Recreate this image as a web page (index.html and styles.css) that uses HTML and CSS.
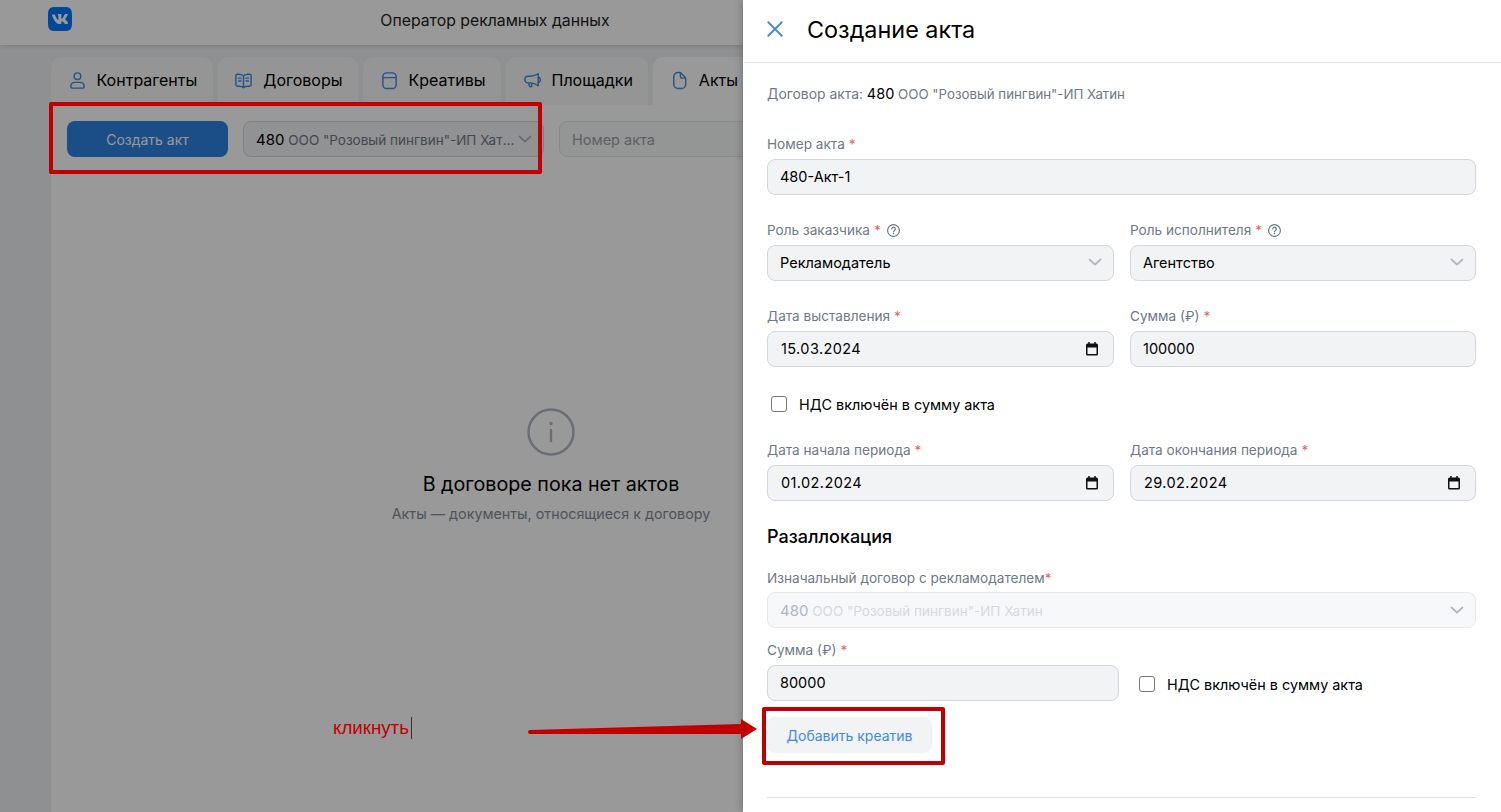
FILE: index.html
```html
<!DOCTYPE html>
<html lang="ru">
<head>
    <meta charset="UTF-8">
    <meta name="viewport" content="width=device-width, initial-scale=1.0">
    <title>Оператор рекламных данных</title>
    <link rel="stylesheet" href="styles.css">
</head>
<body>
    <svg class="sprite" width="0" height="0">
        <symbol id="chevron" viewBox="0 0 16 16"><path d="M2.500 5.500 8 10.500l5.500-5" fill="none" stroke="currentColor" stroke-width="1.7" stroke-linecap="round" stroke-linejoin="round"/></symbol>
        <symbol id="calendar" viewBox="0 0 16 16"><path d="M3.500 2.500h9A1.500 1.500 0 0 1 14 4v9a1.500 1.500 0 0 1-1.500 1.500h-9A1.500 1.500 0 0 1 2 13V4a1.500 1.500 0 0 1 1.500-1.500zM3.500 6.500V13h9V6.500z" fill="#111" fill-rule="evenodd"/><path d="M5 1v2.500M11 1v2.500" stroke="#111" stroke-width="1.500"/></symbol>
        <symbol id="help" viewBox="0 0 16 16"><circle cx="8" cy="8" r="6.300" fill="none" stroke="currentColor" stroke-width="1.300"/><path d="M6.100 6.400a1.900 1.900 0 1 1 3 1.500c-.7.500-1.100.9-1.100 1.700" fill="none" stroke="currentColor" stroke-width="1.300" stroke-linecap="round"/><circle cx="8" cy="11.500" r=".8" fill="currentColor"/></symbol>
    </svg>

    <div class="page">
        <header class="topbar">
            <svg class="logo" viewBox="2 2 20 20"><path fill="#07f" d="M15.070 2H8.930C3.330 2 2 3.330 2 8.930v6.140C2 20.670 3.330 22 8.930 22h6.140c5.600 0 6.930-1.330 6.930-6.930V8.930C22 3.330 20.670 2 15.070 2zm3.080 14.270h-1.460c-.55 0-.72-.44-1.710-1.440-.86-.83-1.240-.94-1.450-.94-.3 0-.38.08-.38.49v1.310c0 .35-.11.56-1.040.56-1.540 0-3.240-.93-4.440-2.670-1.800-2.540-2.300-4.450-2.300-4.840 0-.21.08-.41.49-.41h1.460c.37 0 .51.17.65.570.72 2.080 1.920 3.900 2.410 3.900.19 0 .27-.09.27-.56V9.680c-.06-.99-.58-1.070-.58-1.420 0-.17.14-.34.37-.34h2.290c.31 0 .42.17.42.54v2.890c0 .31.14.42.23.42.19 0 .34-.11.68-.46 1.050-1.180 1.800-2.990 1.800-2.990.1-.21.27-.41.64-.41h1.460c.44 0 .53.23.44.54-.18.85-1.970 3.370-1.970 3.370-.16.25-.22.37 0 .65.16.21.67.65 1.020 1.050.63.72 1.120 1.320 1.250 1.740.13.41-.08.62-.49.62z"/></svg>
            <div class="topbar-title">Оператор рекламных данных</div>
        </header>

        <main class="content">
            <nav class="tabs">
                <a class="tab">
                    <svg class="tab-icon" viewBox="0 0 20 20"><circle cx="10" cy="5.500" r="3.500"/><path d="M3 16c0-2.600 2.200-4 4.500-4h5c2.300 0 4.500 1.400 4.500 4 0 1.300-.9 2-2 2H5c-1.100 0-2-.7-2-2z"/></svg>
                    Контрагенты
                </a>
                <a class="tab">
                    <svg class="tab-icon" viewBox="0 0 20 20"><path d="M10 5c-1.500-1-3-1.500-5-1.500H3.500A1.500 1.500 0 0 0 2 5v9.500A1.500 1.500 0 0 0 3.500 16H6c1.500 0 3 .5 4 1.500 1-1 2.500-1.500 4-1.500h2.500a1.500 1.500 0 0 0 1.500-1.500V5a1.500 1.500 0 0 0-1.500-1.500H15c-2 0-3.500.5-5 1.500zM10 5v12.500M4.800 7.500h2.600M4.800 10.500h2.600M12.600 7.500h2.600M12.600 10.500h2.600"/></svg>
                    Договоры
                </a>
                <a class="tab">
                    <svg class="tab-icon" viewBox="0 0 20 20"><rect x="3" y="2" width="14" height="16.500" rx="4"/><path d="M3 7h14"/></svg>
                    Креативы
                </a>
                <a class="tab">
                    <svg class="tab-icon" viewBox="0 0 20 20"><path d="M16 3v12.500c-3-2-5.500-3-8-3H5a3 3 0 0 1-3-3V8.500a3 3 0 0 1 3-3h3c2.500 0 5-1 8-2.500zM16 6.500c1.500.3 2.300 1.200 2.300 2.800s-.8 2.500-2.300 2.800M6 12.500l.8 3.300a1.300 1.300 0 0 0 2.500-.6L8.800 13"/></svg>
                    Площадки
                </a>
                <a class="tab tab-active">
                    <svg class="tab-icon" viewBox="0 0 20 20"><path d="M4 6A4.500 4.500 0 0 1 8.500 1.500h1.300c.7 0 1.300.3 1.800.7l4.100 4.100c.5.500.8 1.100.8 1.800v6A4.500 4.500 0 0 1 12 18.500H8.500A4.500 4.500 0 0 1 4 14zM11 2v3.500a2 2 0 0 0 2 2h3.300"/></svg>
                    Акты
                </a>
            </nav>

            <section class="tab-panel">
                <div class="toolbar">
                    <button class="btn-primary">Создать акт</button>
                    <div class="field field-select toolbar-select">
                        <span class="select-text"><b>480</b> ООО "Розовый пингвин"-ИП Хатин</span>
                        <svg class="chevron"><use href="#chevron"/></svg>
                    </div>
                    <div class="field field-select toolbar-search">Номер акта</div>
                </div>

                <div class="empty">
                    <svg class="empty-icon" viewBox="0 0 48 48"><circle cx="24" cy="24" r="22.500"/><circle class="empty-dot" cx="24" cy="15.500" r="1.700"/><path d="M24 22v11"/></svg>
                    <div class="empty-title">В договоре пока нет актов</div>
                    <div class="empty-sub">Акты — документы, относящиеся к договору</div>
                </div>
            </section>
        </main>
    </div>

    <div class="overlay"></div>

    <aside class="drawer">
        <div class="drawer-head">
            <svg class="close" viewBox="0 0 20 20"><path d="M2.500 2.500l15 15M17.500 2.500l-15 15"/></svg>
            <h1 class="drawer-title">Создание акта</h1>
        </div>

        <form class="drawer-body">
            <div class="contract-line"><span class="contract-caption">Договор акта:</span> <b>480</b> ООО "Розовый пингвин"-ИП Хатин</div>

            <div class="group group-first">
                <label class="label">Номер акта <i>*</i></label>
                <div class="field">480-Акт-1</div>
            </div>

            <div class="row">
                <div>
                    <label class="label">Роль заказчика <i>*</i> <svg class="help"><use href="#help"/></svg></label>
                    <div class="field">Рекламодатель <svg class="chevron"><use href="#chevron"/></svg></div>
                </div>
                <div>
                    <label class="label">Роль исполнителя <i>*</i> <svg class="help"><use href="#help"/></svg></label>
                    <div class="field">Агентство <svg class="chevron"><use href="#chevron"/></svg></div>
                </div>
            </div>

            <div class="row">
                <div>
                    <label class="label">Дата выставления <i>*</i></label>
                    <div class="field field-date">15.03.2024 <svg class="cal"><use href="#calendar"/></svg></div>
                </div>
                <div>
                    <label class="label">Сумма (₽) <i>*</i></label>
                    <div class="field">100000</div>
                </div>
            </div>

            <div class="check check-vat"><span class="box"></span>НДС включён в сумму акта</div>

            <div class="row row-period">
                <div>
                    <label class="label">Дата начала периода <i>*</i></label>
                    <div class="field field-date">01.02.2024 <svg class="cal"><use href="#calendar"/></svg></div>
                </div>
                <div>
                    <label class="label">Дата окончания периода <i>*</i></label>
                    <div class="field field-date">29.02.2024 <svg class="cal"><use href="#calendar"/></svg></div>
                </div>
            </div>

            <h2 class="section-title">Разаллокация</h2>

            <div class="group group-origin">
                <label class="label label-tight">Изначальный договор с рекламодателем<i>*</i></label>
                <div class="field field-select field-disabled">
                    <span class="select-text"><b>480</b> ООО "Розовый пингвин"-ИП Хатин</span>
                    <svg class="chevron"><use href="#chevron"/></svg>
                </div>
            </div>

            <div class="alloc-row">
                <div>
                    <label class="label">Сумма (₽) <i>*</i></label>
                    <div class="field">80000</div>
                </div>
                <div class="check"><span class="box"></span>НДС включён в сумму акта</div>
            </div>

            <button class="btn-secondary" type="button">Добавить креатив</button>
            <hr class="divider">
        </form>
    </aside>

    <!-- пометки поверх скриншота -->
    <div class="mark mark-toolbar"></div>
    <div class="mark mark-add"></div>
    <div class="click-note">кликнуть<span class="caret"></span></div>
    <svg class="arrow" viewBox="0 0 240 24"><path d="M2 11 213 5V0l16 10-16 10v-5L2 15a2 2 0 0 1 0-4z"/></svg>
</body>
</html>
```

FILE: styles.css
```css
* {
    margin: 0;
    padding: 0;
    box-sizing: border-box;
}

html, body {
    width: 100%;
    height: 100%;
    overflow: hidden;
}

body {
    position: relative;
    font-family: 'Inter', 'Roboto', sans-serif;
    font-size: 14px;
    color: #000;
    background: #edf0f3;
}

.sprite {
    position: absolute;
}

.page {
    height: 100%;
}

.topbar {
    height: 45px;
    display: flex;
    padding-left: 48px;
    background: #fff;
    box-shadow: 0 1px 4px rgba(0,0,0,0.15);
}

.logo {
    width: 24px;
    height: 24px;
    margin-top: 7px;
}

.topbar-title {
    width: 846px;
    padding-top: 11px;
    font-size: 15.8px;
    line-height: 20px;
    text-align: center;
    color: #222;
}

.content {
    width: 1000px;
    margin: 12px 0 0 51px;
}

.tabs {
    display: flex;
    gap: 5px;
}

.tab {
    display: flex;
    align-items: center;
    gap: 10px;
    height: 48px;
    padding: 0 15.5px 2px 16.5px;
    font-size: 16px;
    background: #f8f8f8;
    border-radius: 10px 10px 0 0;
    white-space: nowrap;
}

.tab-active {
    background: #fff;
}

.tab-icon {
    width: 19px;
    height: 19px;
    fill: none;
    stroke: #3f8ae0;
    stroke-width: 1.5;
    stroke-linejoin: round;
    stroke-linecap: round;
}

.tab-panel {
    height: 707px;
    background: #fff;
}

.toolbar {
    display: flex;
    gap: 15px;
    padding: 16px 16px 0;
}

.btn-primary {
    width: 161px;
    height: 36px;
    border: none;
    border-radius: 8px;
    background: #2d81e0;
    color: #fff;
    font: inherit;
}

.field {
    display: flex;
    align-items: center;
    justify-content: space-between;
    height: 36px;
    padding: 0 12px 2px;
    background: #f2f3f5;
    border: 1px solid #d3d6da;
    border-radius: 8px;
    font-size: 14.5px;
    white-space: nowrap;
}

.field-select {
    padding-bottom: 0;
}

.field-date {
    padding-left: 13px;
    letter-spacing: 0.4px;
}

.toolbar-select {
    width: 301px;
    flex: none;
}

.toolbar-search {
    flex: 1;
    background: #f7f8f9;
    border-color: #e2e4e7;
    color: #99a2ad;
}

.select-text {
    overflow: hidden;
    text-overflow: ellipsis;
    font-size: 13.5px;
    color: #6f7985;
}

.select-text b {
    font-size: 15px;
    font-weight: 400;
    color: #000;
}

.chevron {
    flex: none;
    width: 16px;
    height: 16px;
    margin-right: -2px;
    color: #aeb7c2;
}

.cal {
    flex: none;
    width: 16px;
    height: 16px;
    margin-right: 1px;
    margin-top: 2px;
}

.empty {
    display: flex;
    flex-direction: column;
    align-items: center;
    padding-top: 251px;
}

.empty-icon {
    width: 48px;
    height: 48px;
    fill: none;
    stroke: #aeb7c2;
    stroke-width: 2.4;
    stroke-linecap: round;
}

.empty-dot {
    fill: #aeb7c2;
    stroke: none;
}

.empty-title {
    margin-top: 16px;
    font-size: 19.7px;
    line-height: 24px;
}

.empty-sub {
    margin-top: 8px;
    font-size: 14.3px;
    line-height: 20px;
    color: #818c99;
}

.overlay {
    position: absolute;
    inset: 0;
    background: rgba(0,0,0,0.4);
}

.drawer {
    position: absolute;
    top: 0;
    right: 0;
    bottom: 0;
    width: 758px;
    padding-left: 1px;
    background: #fff;
    box-shadow: 0 0 8px rgba(0,0,0,0.3);
}

.drawer-head {
    display: flex;
    align-items: center;
    gap: 23px;
    height: 63px;
    padding: 0 0 4px 22px;
    border-bottom: 1px solid #e2e4e7;
}

.close {
    width: 18px;
    height: 18px;
    fill: none;
    stroke: #3f8ae0;
    stroke-width: 2;
    stroke-linecap: round;
}

.drawer-title {
    font-size: 23.4px;
    font-weight: 400;
}

.drawer-body {
    padding: 21px 25px 0 23px;
}

.contract-line {
    font-size: 13.3px;
    line-height: 20px;
    color: #6f7985;
}

.contract-caption {
    font-size: 13.9px;
}

.contract-line b {
    font-size: 14.5px;
    font-weight: 400;
    color: #000;
}

.group-first {
    margin-top: 30px;
}

.label {
    display: flex;
    align-items: center;
    gap: 4px;
    height: 20px;
    margin-bottom: 5px;
    font-size: 13.6px;
    color: #6f7985;
}

.label-tight {
    gap: 0;
    margin-bottom: 4px;
}

.label i {
    font-style: normal;
    color: #e5656a;
}

.help {
    width: 15px;
    height: 15px;
    margin-left: 1px;
}

.row {
    display: grid;
    grid-template-columns: 347px 346px;
    gap: 16px;
    margin-top: 25px;
}

.check {
    display: flex;
    align-items: center;
    height: 20px;
    font-size: 14.4px;
}

.check-vat {
    margin-top: 27px;
    padding-left: 4px;
}

.box {
    flex: none;
    width: 16px;
    height: 16px;
    margin-right: 12px;
    border: 1px solid #767676;
    border-radius: 3px;
    background: #fff;
}

.row-period {
    margin-top: 26px;
}

.section-title {
    margin-top: 24px;
    font-size: 18px;
    font-weight: 500;
    line-height: 24px;
}

.group-origin {
    margin-top: 19px;
}

.field-disabled {
    background: #f7f8fa;
    border-color: #e7e8ea;
}

.field-disabled .select-text {
    color: #d5d8dd;
}

.field-disabled .select-text b {
    color: #aeb7c2;
}

.alloc-row {
    display: grid;
    grid-template-columns: 352px auto;
    column-gap: 20px;
    margin-top: 12px;
}

.alloc-row .check {
    align-self: end;
    margin-bottom: 7px;
}

.btn-secondary {
    display: block;
    width: 165px;
    height: 36px;
    margin-top: 16px;
    border: none;
    border-radius: 8px;
    background: #f2f3f5;
    color: #3f8ae0;
    font: inherit;
}

.divider {
    margin-top: 44px;
    border: none;
    border-top: 1px solid #dce1e6;
}

.mark {
    position: absolute;
    border: 4px solid #c00000;
    border-radius: 2px;
}

.mark-toolbar {
    left: 49px;
    top: 102px;
    width: 493px;
    height: 72px;
}

.mark-add {
    left: 762px;
    top: 707px;
    width: 183px;
    height: 58px;
}

.click-note {
    position: absolute;
    left: 333px;
    top: 717px;
    display: flex;
    font-family: 'Liberation Sans', sans-serif;
    font-size: 18.7px;
    line-height: 22px;
    color: #c00000;
}

.caret {
    width: 1px;
    margin-left: 2px;
    background: #333;
}

.arrow {
    position: absolute;
    left: 528px;
    top: 719px;
    width: 240px;
    height: 24px;
    fill: #c00000;
}
```
